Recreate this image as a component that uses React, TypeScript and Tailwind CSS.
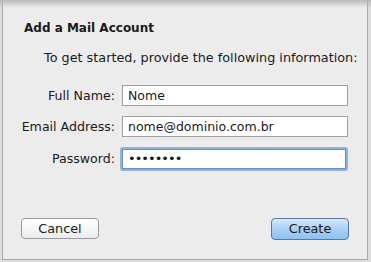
export default function App() {
  const fields = [
    { label: "Full Name:", value: "Nome", focused: false },
    { label: "Email Address:", value: "nome@dominio.com.br", focused: false },
    { label: "Password:", value: "••••••••", focused: true },
  ];

  return (
    <div className="relative w-[371px] h-[262px] bg-[#dcdcdc] overflow-hidden font-['DejaVu_Sans',sans-serif] text-[#1a1a1a]">
      <div className="ml-[2px] mr-[3px] h-[260px] bg-[#ececec] border-l border-r border-b border-[#a9a9a9] flex flex-col">
        <div className="pl-[21px] pt-[20px] text-[12px] font-bold leading-[16px]">Add a Mail Account</div>
        <div className="pl-[41px] pt-[14px] text-[12.8px] leading-[16px]">
          To get started, provide the following information:
        </div>

        <div className="mt-[19px] flex flex-col gap-[10px]">
          {fields.map((f) => (
            <div key={f.label} className="flex items-center">
              <div className="w-[112px] text-right text-[12.6px] leading-[16px]">{f.label}</div>
              <div
                className={
                  f.focused
                    ? "ml-[5px] w-[228px] h-[24px] rounded-[3px] border-[2px] border-[#8fb3df] flex items-center"
                    : "ml-[7px] w-[226px] h-[21px] border border-[#a0a0a0] bg-white flex items-center"
                }
              >
                <div
                  className={
                    f.focused
                      ? "w-full h-[20px] bg-white border border-[#6c8fc0] flex items-center pl-[5px] text-[13px] tracking-[-1px]"
                      : "pl-[5px] text-[12.5px] leading-[16px]"
                  }
                >
                  {f.value}
                </div>
              </div>
            </div>
          ))}
        </div>

        <div className="mt-auto mb-[19px] flex justify-between pl-[18px] pr-[18px]">
          <button className="w-[78px] h-[21px] rounded-[4px] border border-[#9a9a9a] bg-gradient-to-b from-white to-[#ececec] text-[12.8px] leading-[16px]">
            Cancel
          </button>
          <button className="w-[78px] h-[22px] rounded-[4px] border border-[#5a75a6] bg-gradient-to-b from-[#d6e8fb] via-[#a9cff4] to-[#8cc2f5] text-[12.8px] leading-[16px]">
            Create
          </button>
        </div>
      </div>
      <div className="absolute left-0 top-0 w-full h-[8px] bg-gradient-to-b from-[#b8b8b8] to-transparent" />
    </div>
  );
}
